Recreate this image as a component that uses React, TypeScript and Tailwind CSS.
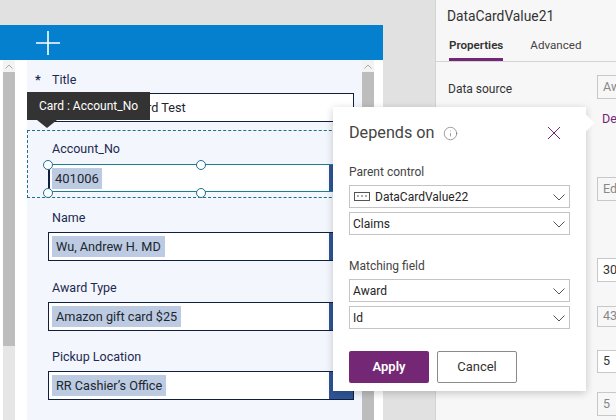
import { Info } from "lucide-react";

type FieldProps = {
  label: string;
  value: string;
  top: string;
};

function Field({ label, value, top }: FieldProps) {
  return (
    <div className={`pl-[21px] ${top}`}>
      <p className="pl-[4px] text-[12.5px] leading-[18px] text-[#1d2a52]">{label}</p>
      <div className="mt-[5px] flex h-[29px] w-[306px] items-center border border-[#0f1f3d] bg-white pl-[3px]">
        <span className="bg-[#bccbe2] px-[4px] text-[12.7px] leading-[21px] text-[#20262e]">{value}</span>
        <span className="ml-auto h-full w-[24px] bg-[#2f5597]" />
      </div>
    </div>
  );
}

function Picker({ children }: { children: React.ReactNode }) {
  return (
    <div className="flex h-[23px] items-center border border-[#c4c4c4] bg-white pl-[3px] pr-[4px] pt-[1px] text-[12px] text-[#252525]">
      {children}
      <svg width="12" height="7" viewBox="0 0 12 7" className="ml-auto">
        <path d="M0.5 0.5 6 6 11.5 0.5" fill="none" stroke="#555" />
      </svg>
    </div>
  );
}

function Handle({ className }: { className: string }) {
  return <span className={`absolute h-[10px] w-[10px] rounded-full border border-[#1d6f8c] bg-white ${className}`} />;
}

function ScrollBar({ thumb }: { thumb: string }) {
  return (
    <div className="flex w-[12px] flex-col bg-[#e6e6e6]">
      <div className="flex h-[12px] items-center justify-center bg-[#f3f3f3]">
        <svg width="8" height="5" viewBox="0 0 8 5">
          <path d="M0.5 4.5 4 1 7.5 4.5" fill="none" stroke="#aaa" />
        </svg>
      </div>
      <div className={`bg-[#bdbdbd] ${thumb}`} />
    </div>
  );
}

function PanelBox({ text, className }: { text: string; className: string }) {
  return (
    <div className={`ml-[161px] flex w-[40px] items-center border border-[#c8c8c8] pl-[5px] text-[12.5px] ${className}`}>{text}</div>
  );
}

export default function App() {
  return (
    <div
      className="relative flex h-[420px] w-[616px] overflow-hidden bg-[#e1e1e1]"
      style={{ fontFamily: 'Roboto, "Noto Sans", sans-serif' }}
    >
      <div className="w-[383px] shrink-0">
        <div className="h-[25px]" />
        <div className="flex h-[35px] items-center bg-[#0480cf] pl-[36px]">
          <svg width="24" height="24" viewBox="0 0 24 24">
            <path d="M12 0v24M0 12h24" stroke="#fff" strokeWidth="1.6" fill="none" />
          </svg>
        </div>
        <div className="flex h-[360px] bg-white">
          <div className="w-[3px]" />
          <ScrollBar thumb="h-[274px]" />
          <div className="w-[12px]" />
          <div className="w-[335px] bg-[#f3f6fc]">
            <div className="flex pl-[8px] pt-[11px] text-[12.5px] leading-[18px] text-[#1d2a52]">
              <span className="w-[17px] font-bold">*</span>
              <span>Title</span>
            </div>
            <div className="ml-[21px] mt-[4px] flex h-[29px] w-[306px] items-center border border-[#0f1f3d] bg-white pl-[98px] pt-[1px] text-[12.7px] text-[#20262e]">
              rd Test
            </div>
            <div className="mt-[8px] h-[68px] border border-dashed border-[#1d6f8c]">
              <div className="pl-[24px] pt-[9px] text-[12.5px] leading-[18px] text-[#1d2a52]">Account_No</div>
              <div className="relative ml-[20px] mt-[6px] flex h-[28px] w-[306px] items-center border-y border-[#1d7f95] bg-white pl-[3px]">
                <span className="absolute left-0 top-[3px] h-[22px] w-[2px] bg-[#0f1f3d]" />
                <span className="ml-[1px] bg-[#bccbe2] px-[3px] text-[13px] leading-[21px] text-[#20262e]">401006</span>
                <span className="ml-auto h-full w-[25px] bg-[#2f5597]" />
                <Handle className="left-[-5px] top-[-5px]" />
                <Handle className="left-[-5px] top-[23px]" />
                <Handle className="left-[148px] top-[-5px]" />
                <Handle className="left-[148px] top-[23px]" />
              </div>
            </div>
            <Field label="Name" value="Wu, Andrew H. MD" top="pt-[11px]" />
            <Field label="Award Type" value="Amazon gift card $25" top="pt-[18px]" />
            <Field label="Pickup Location" value="RR Cashier’s Office" top="pt-[17px]" />
          </div>
          <ScrollBar thumb="flex-1" />
        </div>
      </div>

      <div className="ml-[52px] w-[181px] border-l border-[#d4d4d4] bg-[#f7f7f7]">
        <p className="pl-[11px] pt-[6px] text-[13.8px] leading-[20px] text-[#333]">DataCardValue21</p>
        <div className="flex h-[36px] items-end gap-[27px] border-b border-[#d4d4d4] pl-[13px] text-[11.6px]">
          <span className="border-b-[3px] border-[#742774] pb-[4px] font-semibold text-[#333]">Properties</span>
          <span className="pb-[7px] text-[#444]">Advanced</span>
        </div>
        <p className="mt-[18px] pl-[12px] text-[12px] leading-[18px] text-[#333]">Data source</p>
        <PanelBox text="Aw" className="mt-[-23px] h-[24px] text-[#888]" />
        <p className="ml-[166px] mt-[11px] text-[12.5px] leading-[18px] text-[#742774]">De</p>
        <PanelBox text="Edi" className="mt-[49px] h-[24px] text-[#888]" />
        <PanelBox text="30" className="mt-[57px] h-[24px] bg-white text-[#333]" />
        <PanelBox text="43" className="mt-[24px] h-[21px] text-[#888]" />
        <PanelBox text="5" className="mt-[23px] h-[23px] bg-white text-[#333]" />
        <PanelBox text="5" className="mt-[19px] h-[24px] text-[#888]" />
      </div>

      <div className="absolute left-[27px] top-[92px] flex h-[28px] w-[123px] items-center justify-center bg-[#333] text-[12px] text-white">
        Card : Account_No
        <span className="absolute left-[10px] top-[28px] h-0 w-0 border-x-[10px] border-t-[8px] border-x-transparent border-t-[#333]" />
      </div>

      <div className="absolute left-[333px] top-[107px] h-[284px] w-[253px] bg-white px-[16px] shadow-[0_2px_8px_rgba(0,0,0,0.2)]">
        <span className="absolute left-[247px] top-[10px] h-[12px] w-[12px] rotate-45 bg-white" />
        <div className="flex h-[52px] items-center">
          <span className="text-[16.2px] text-[#444]">Depends on</span>
          <Info className="ml-[8px] h-[15px] w-[15px] text-[#666]" strokeWidth={1} />
          <svg width="14" height="14" viewBox="0 0 14 14" className="ml-auto mr-[9px]">
            <path d="M1 1 13 13M13 1 1 13" fill="none" stroke="#742774" />
          </svg>
        </div>
        <p className="mt-[4px] text-[12px] leading-[18px] text-[#444]">Parent control</p>
        <div className="mt-[4px] flex w-[221px] flex-col gap-[4px]">
          <Picker>
            <svg width="16" height="11" viewBox="0 0 16 11" className="mr-[5px] ml-[1px]">
              <rect x="0.5" y="0.5" width="15" height="8" fill="none" stroke="#555" />
              <path d="M3 4h2M7 4h2M11 4h2" stroke="#555" />
            </svg>
            DataCardValue22
          </Picker>
          <Picker>Claims</Picker>
        </div>
        <p className="mt-[22px] text-[12px] leading-[18px] text-[#444]">Matching field</p>
        <div className="mt-[4px] flex w-[221px] flex-col gap-[4px]">
          <Picker>Award</Picker>
          <Picker>Id</Picker>
        </div>
        <div className="mt-[22px] flex gap-[8px]">
          <div className="flex h-[32px] w-[80px] items-center justify-center rounded-[2px] bg-[#742774] text-[13px] font-semibold text-white">Apply</div>
          <div className="flex h-[32px] w-[80px] items-center justify-center rounded-[2px] border border-[#8a8a8a] bg-white text-[13px] text-[#333]">Cancel</div>
        </div>
      </div>
    </div>
  );
}
